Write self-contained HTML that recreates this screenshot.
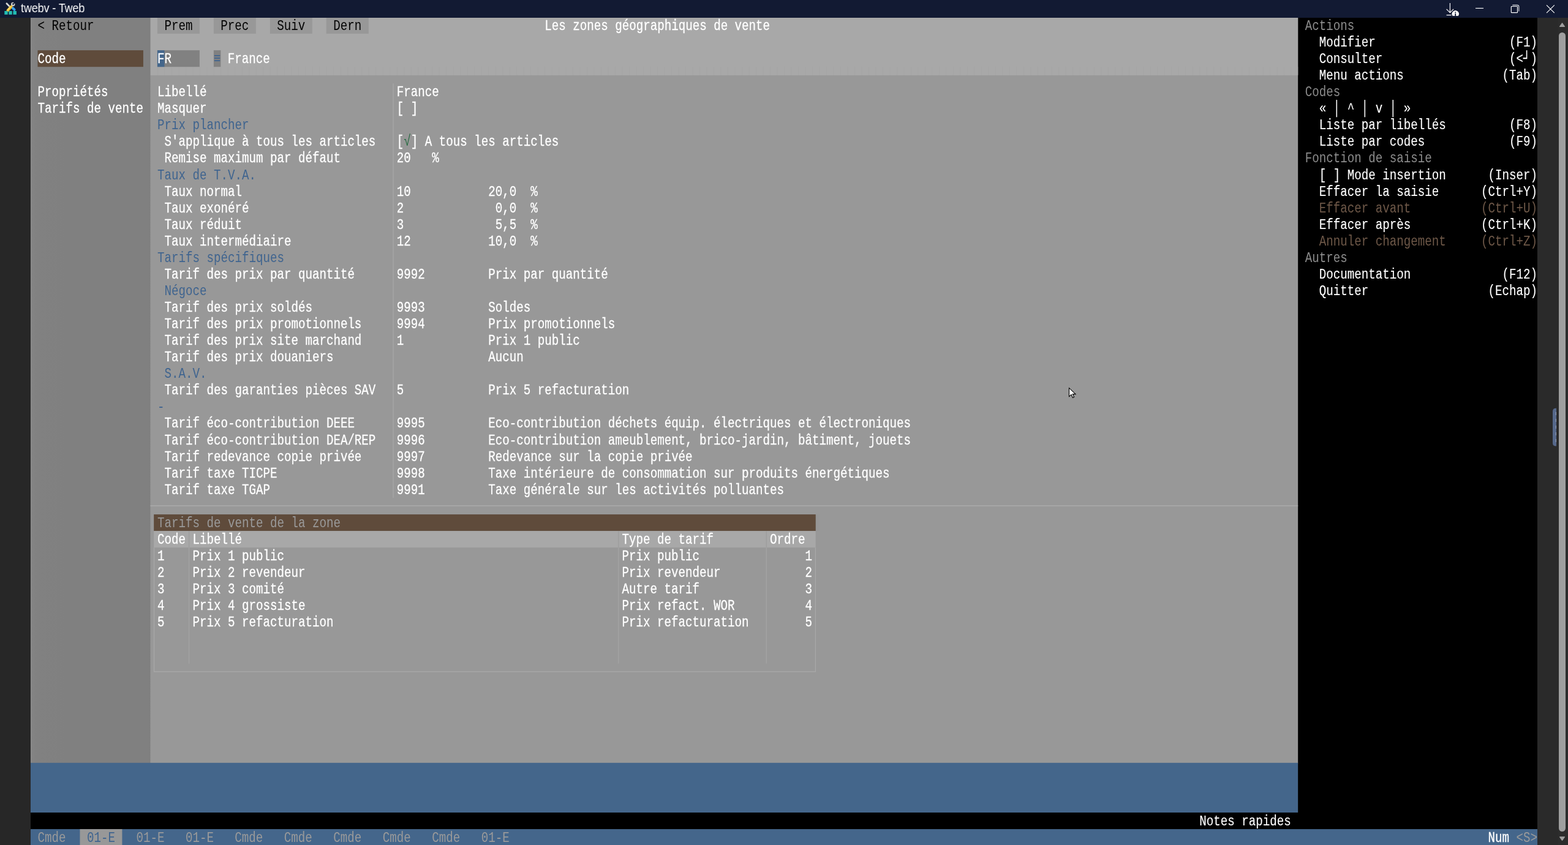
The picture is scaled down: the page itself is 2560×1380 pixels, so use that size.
<!DOCTYPE html>
<html lang="fr"><head><meta charset="utf-8"><title>twebv - Tweb</title>
<style>
html,body{margin:0;padding:0}
body{width:2560px;height:1380px;overflow:hidden;background:#272727;position:relative;font-family:"Liberation Mono",monospace}
#scr{position:absolute;left:0;top:0;width:2560px;height:1380px;overflow:hidden}
.b{position:absolute}
#tx{position:absolute;left:0;top:0;width:2560px;height:1380px;will-change:transform}
.t{position:absolute;white-space:pre;font-family:"Liberation Mono",monospace;font-size:24.75px;line-height:27.06px;height:27.06px;transform-origin:0 0;transform:scaleX(0.77397);color:#fff;-webkit-text-stroke:0.3px #fff}
.n{-webkit-text-stroke:0 transparent}
.d{-webkit-text-stroke:0.12px #fff}
#tb{position:absolute;left:0;top:0;width:2560px;height:29px;background:#121a33}
#tbt{position:absolute;left:34px;top:-1px;height:28px;line-height:28px;font-family:"Liberation Sans",sans-serif;font-size:19.4px;color:#fff;white-space:pre;will-change:transform;transform-origin:0 0;transform:scaleX(0.916)}
#sb{position:absolute;left:2510px;top:29px;width:50px;height:1351px;background:#2a2a2a}
</style></head><body><div id="scr">

<svg class="b" style="left:0;top:0" width="2560" height="1380" viewBox="0 0 2560 1380">
<defs><linearGradient id="lg" x1="0" x2="1" y1="0" y2="0"><stop offset="0" stop-color="#858585"/><stop offset="0.05" stop-color="#818181"/><stop offset="0.3" stop-color="#808080"/><stop offset="0.985" stop-color="#808080"/><stop offset="1" stop-color="#7d7d7d"/></linearGradient>
<pattern id="seam" x="50" y="0" width="11.4953" height="40" patternUnits="userSpaceOnUse"><rect x="0" y="0" width="11.4953" height="40" fill="#a8a8a8"/><rect x="0" y="0" width="1" height="40" fill="#a4a4a4"/></pattern></defs>
<rect x="50" y="28" width="2460" height="1352" fill="#000"/>
<rect x="50" y="28" width="2069.16" height="1218.81" fill="#989898"/>
<rect x="245.42" y="28" width="1873.74" height="94.72" fill="#a8a8a8"/>
<rect x="245.42" y="109.19" width="1873.74" height="13.53" fill="url(#seam)"/>
<rect x="50" y="28" width="195.42" height="1218.81" fill="url(#lg)"/>
<rect x="50" y="28" width="1.2" height="1217.81" fill="#8b8b8b"/>
<rect x="50" y="1245.81" width="2069.16" height="81.19" fill="#44668b"/>
<rect x="50" y="1354.06" width="2460" height="25.94" fill="#44668b"/>
<rect x="256.92" y="28" width="68.97" height="27.06" fill="#989898"/>
<rect x="348.88" y="28" width="68.97" height="27.06" fill="#989898"/>
<rect x="440.84" y="28" width="68.97" height="27.06" fill="#989898"/>
<rect x="532.8" y="28" width="68.97" height="27.06" fill="#989898"/>
<rect x="61.5" y="82.12" width="172.43" height="27.06" fill="#5f4b3b"/>
<rect x="256.92" y="82.12" width="68.97" height="27.06" fill="#818181"/>
<rect x="256.92" y="82.12" width="11.5" height="27.06" fill="#44668b"/>
<rect x="348.88" y="82.12" width="11.5" height="27.06" fill="#818181"/>
<rect x="641.3" y="136.25" width="1.6" height="676.56" fill="#a5a5a5"/>
<rect x="245.42" y="825.2" width="1873.74" height="1.7" fill="#a9a9a9"/>
<rect x="1330.73" y="840.1" width="6.75" height="27.06" fill="#969696"/>
<rect x="251.17" y="840.1" width="1080.56" height="27.06" fill="#5f4b3b"/>
<rect x="251.17" y="867.16" width="1080.56" height="27.06" fill="#a8a8a8"/>
<rect x="250.87" y="894.23" width="1.3" height="202.97" fill="#a8a8a8"/>
<rect x="1330.73" y="894.23" width="1.3" height="202.97" fill="#a8a8a8"/>
<rect x="250.87" y="1096.19" width="1081.16" height="1.4" fill="#a8a8a8"/>
<rect x="308.04" y="867.16" width="1.1" height="27.06" fill="#9b9b9b"/>
<rect x="308.04" y="894.23" width="1.1" height="189.44" fill="#a6a6a6"/>
<rect x="1009.26" y="867.16" width="1.1" height="27.06" fill="#9b9b9b"/>
<rect x="1009.26" y="894.23" width="1.1" height="189.44" fill="#a6a6a6"/>
<rect x="1250.66" y="867.16" width="1.1" height="27.06" fill="#9b9b9b"/>
<rect x="1250.66" y="894.23" width="1.1" height="189.44" fill="#a6a6a6"/>
<rect x="130.47" y="1354.06" width="68.97" height="25.94" fill="#989898"/>
</svg>

<div id="tx">
<span class="t n" style="left:61px;top:28.95px;transform:translateX(0.5px) scaleX(0.77397);color:#000">&lt; Retour</span>
<span class="t n" style="left:268px;top:28.95px;transform:translateX(0.5px) scaleX(0.77397);color:#000">Prem</span>
<span class="t n" style="left:360px;top:28.95px;transform:translateX(0.25px) scaleX(0.77397);color:#000">Prec</span>
<span class="t n" style="left:452px;top:28.95px;transform:translateX(0.25px) scaleX(0.77397);color:#000">Suiv</span>
<span class="t n" style="left:544px;top:28.95px;transform:translateX(0.25px) scaleX(0.77397);color:#000">Dern</span>
<span class="t" style="left:889px;top:28.95px;transform:translateX(0.25px) scaleX(0.77397)">Les zones géographiques de vente</span>
<span class="t" style="left:61px;top:83.08px;transform:translateX(0.5px) scaleX(0.77397)">Code</span>
<span class="t" style="left:257px;top:83.08px">FR</span>
<span class="t n" style="left:349px;top:83.08px;color:#3f648f">≡</span>
<span class="t" style="left:371px;top:83.08px;transform:translateX(0.75px) scaleX(0.77397)">France</span>
<span class="t" style="left:61px;top:137.2px;transform:translateX(0.5px) scaleX(0.77397)">Propriétés</span>
<span class="t" style="left:61px;top:164.26px;transform:translateX(0.5px) scaleX(0.77397)">Tarifs de vente</span>
<span class="t" style="left:257px;top:137.2px">Libellé</span>
<span class="t" style="left:647px;top:137.2px;transform:translateX(0.75px) scaleX(0.77397)">France</span>
<span class="t" style="left:257px;top:164.26px">Masquer</span>
<span class="t" style="left:647px;top:164.26px;transform:translateX(0.75px) scaleX(0.77397)">[ ]</span>
<span class="t n" style="left:257px;top:191.32px;color:#3f648f">Prix plancher</span>
<span class="t" style="left:268px;top:218.39px;transform:translateX(0.5px) scaleX(0.77397)">S'applique à tous les articles</span>
<span class="t" style="left:647px;top:218.39px;transform:translateX(0.75px) scaleX(0.77397)">[ ] A tous les articles</span>
<span class="t" style="left:268px;top:245.45px;transform:translateX(0.5px) scaleX(0.77397)">Remise maximum par défaut</span>
<span class="t" style="left:647px;top:245.45px;transform:translateX(0.75px) scaleX(0.77397)">20   %</span>
<span class="t n" style="left:257px;top:272.51px;color:#3f648f">Taux de T.V.A.</span>
<span class="t" style="left:268px;top:299.57px;transform:translateX(0.5px) scaleX(0.77397)">Taux normal</span>
<span class="t" style="left:647px;top:299.57px;transform:translateX(0.75px) scaleX(0.77397)">10</span>
<span class="t" style="left:797px;top:299.57px;transform:translateX(0.25px) scaleX(0.77397)">20,0  %</span>
<span class="t" style="left:268px;top:326.64px;transform:translateX(0.5px) scaleX(0.77397)">Taux exonéré</span>
<span class="t" style="left:647px;top:326.64px;transform:translateX(0.75px) scaleX(0.77397)">2</span>
<span class="t" style="left:797px;top:326.64px;transform:translateX(0.25px) scaleX(0.77397)"> 0,0  %</span>
<span class="t" style="left:268px;top:353.7px;transform:translateX(0.5px) scaleX(0.77397)">Taux réduit</span>
<span class="t" style="left:647px;top:353.7px;transform:translateX(0.75px) scaleX(0.77397)">3</span>
<span class="t" style="left:797px;top:353.7px;transform:translateX(0.25px) scaleX(0.77397)"> 5,5  %</span>
<span class="t" style="left:268px;top:380.76px;transform:translateX(0.5px) scaleX(0.77397)">Taux intermédiaire</span>
<span class="t" style="left:647px;top:380.76px;transform:translateX(0.75px) scaleX(0.77397)">12</span>
<span class="t" style="left:797px;top:380.76px;transform:translateX(0.25px) scaleX(0.77397)">10,0  %</span>
<span class="t n" style="left:257px;top:407.82px;color:#3f648f">Tarifs spécifiques</span>
<span class="t" style="left:268px;top:434.89px;transform:translateX(0.5px) scaleX(0.77397)">Tarif des prix par quantité</span>
<span class="t" style="left:647px;top:434.89px;transform:translateX(0.75px) scaleX(0.77397)">9992</span>
<span class="t" style="left:797px;top:434.89px;transform:translateX(0.25px) scaleX(0.77397)">Prix par quantité</span>
<span class="t n" style="left:268px;top:461.95px;transform:translateX(0.5px) scaleX(0.77397);color:#3f648f">Négoce</span>
<span class="t" style="left:268px;top:489.01px;transform:translateX(0.5px) scaleX(0.77397)">Tarif des prix soldés</span>
<span class="t" style="left:647px;top:489.01px;transform:translateX(0.75px) scaleX(0.77397)">9993</span>
<span class="t" style="left:797px;top:489.01px;transform:translateX(0.25px) scaleX(0.77397)">Soldes</span>
<span class="t" style="left:268px;top:516.08px;transform:translateX(0.5px) scaleX(0.77397)">Tarif des prix promotionnels</span>
<span class="t" style="left:647px;top:516.08px;transform:translateX(0.75px) scaleX(0.77397)">9994</span>
<span class="t" style="left:797px;top:516.08px;transform:translateX(0.25px) scaleX(0.77397)">Prix promotionnels</span>
<span class="t" style="left:268px;top:543.14px;transform:translateX(0.5px) scaleX(0.77397)">Tarif des prix site marchand</span>
<span class="t" style="left:647px;top:543.14px;transform:translateX(0.75px) scaleX(0.77397)">1</span>
<span class="t" style="left:797px;top:543.14px;transform:translateX(0.25px) scaleX(0.77397)">Prix 1 public</span>
<span class="t" style="left:268px;top:570.2px;transform:translateX(0.5px) scaleX(0.77397)">Tarif des prix douaniers</span>
<span class="t" style="left:797px;top:570.2px;transform:translateX(0.25px) scaleX(0.77397)">Aucun</span>
<span class="t n" style="left:268px;top:597.26px;transform:translateX(0.5px) scaleX(0.77397);color:#3f648f">S.A.V.</span>
<span class="t" style="left:268px;top:624.33px;transform:translateX(0.5px) scaleX(0.77397)">Tarif des garanties pièces SAV</span>
<span class="t" style="left:647px;top:624.33px;transform:translateX(0.75px) scaleX(0.77397)">5</span>
<span class="t" style="left:797px;top:624.33px;transform:translateX(0.25px) scaleX(0.77397)">Prix 5 refacturation</span>
<span class="t n" style="left:257px;top:651.39px;color:#3f648f">-</span>
<span class="t" style="left:268px;top:678.45px;transform:translateX(0.5px) scaleX(0.77397)">Tarif éco-contribution DEEE</span>
<span class="t" style="left:647px;top:678.45px;transform:translateX(0.75px) scaleX(0.77397)">9995</span>
<span class="t" style="left:797px;top:678.45px;transform:translateX(0.25px) scaleX(0.77397)">Eco-contribution déchets équip. électriques et électroniques</span>
<span class="t" style="left:268px;top:705.51px;transform:translateX(0.5px) scaleX(0.77397)">Tarif éco-contribution DEA/REP</span>
<span class="t" style="left:647px;top:705.51px;transform:translateX(0.75px) scaleX(0.77397)">9996</span>
<span class="t" style="left:797px;top:705.51px;transform:translateX(0.25px) scaleX(0.77397)">Eco-contribution ameublement, brico-jardin, bâtiment, jouets</span>
<span class="t" style="left:268px;top:732.58px;transform:translateX(0.5px) scaleX(0.77397)">Tarif redevance copie privée</span>
<span class="t" style="left:647px;top:732.58px;transform:translateX(0.75px) scaleX(0.77397)">9997</span>
<span class="t" style="left:797px;top:732.58px;transform:translateX(0.25px) scaleX(0.77397)">Redevance sur la copie privée</span>
<span class="t" style="left:268px;top:759.64px;transform:translateX(0.5px) scaleX(0.77397)">Tarif taxe TICPE</span>
<span class="t" style="left:647px;top:759.64px;transform:translateX(0.75px) scaleX(0.77397)">9998</span>
<span class="t" style="left:797px;top:759.64px;transform:translateX(0.25px) scaleX(0.77397)">Taxe intérieure de consommation sur produits énergétiques</span>
<span class="t" style="left:268px;top:786.7px;transform:translateX(0.5px) scaleX(0.77397)">Tarif taxe TGAP</span>
<span class="t" style="left:647px;top:786.7px;transform:translateX(0.75px) scaleX(0.77397)">9991</span>
<span class="t" style="left:797px;top:786.7px;transform:translateX(0.25px) scaleX(0.77397)">Taxe générale sur les activités polluantes</span>
<span class="t n" style="left:659px;top:218.39px;transform:translateX(0.25px) scaleX(0.77397);color:#256a40">√</span>
<span class="t n" style="left:257px;top:841.05px;color:#9a9a9a">Tarifs de vente de la zone</span>
<span class="t" style="left:257px;top:868.11px">Code</span>
<span class="t" style="left:314px;top:868.11px;transform:translateX(0.5px) scaleX(0.77397)">Libellé</span>
<span class="t" style="left:1015px;top:868.11px;transform:translateX(0.5px) scaleX(0.77397)">Type de tarif</span>
<span class="t" style="left:1257px;top:868.11px">Ordre</span>
<span class="t" style="left:257px;top:895.18px">1</span>
<span class="t" style="left:314px;top:895.18px;transform:translateX(0.5px) scaleX(0.77397)">Prix 1 public</span>
<span class="t" style="left:1015px;top:895.18px;transform:translateX(0.5px) scaleX(0.77397)">Prix public</span>
<span class="t" style="left:1314px;top:895.18px;transform:translateX(0.5px) scaleX(0.77397)">1</span>
<span class="t" style="left:257px;top:922.24px">2</span>
<span class="t" style="left:314px;top:922.24px;transform:translateX(0.5px) scaleX(0.77397)">Prix 2 revendeur</span>
<span class="t" style="left:1015px;top:922.24px;transform:translateX(0.5px) scaleX(0.77397)">Prix revendeur</span>
<span class="t" style="left:1314px;top:922.24px;transform:translateX(0.5px) scaleX(0.77397)">2</span>
<span class="t" style="left:257px;top:949.3px">3</span>
<span class="t" style="left:314px;top:949.3px;transform:translateX(0.5px) scaleX(0.77397)">Prix 3 comité</span>
<span class="t" style="left:1015px;top:949.3px;transform:translateX(0.5px) scaleX(0.77397)">Autre tarif</span>
<span class="t" style="left:1314px;top:949.3px;transform:translateX(0.5px) scaleX(0.77397)">3</span>
<span class="t" style="left:257px;top:976.36px">4</span>
<span class="t" style="left:314px;top:976.36px;transform:translateX(0.5px) scaleX(0.77397)">Prix 4 grossiste</span>
<span class="t" style="left:1015px;top:976.36px;transform:translateX(0.5px) scaleX(0.77397)">Prix refact. WOR</span>
<span class="t" style="left:1314px;top:976.36px;transform:translateX(0.5px) scaleX(0.77397)">4</span>
<span class="t" style="left:257px;top:1003.43px">5</span>
<span class="t" style="left:314px;top:1003.43px;transform:translateX(0.5px) scaleX(0.77397)">Prix 5 refacturation</span>
<span class="t" style="left:1015px;top:1003.43px;transform:translateX(0.5px) scaleX(0.77397)">Prix refacturation</span>
<span class="t" style="left:1314px;top:1003.43px;transform:translateX(0.5px) scaleX(0.77397)">5</span>
<span class="t n" style="left:2130px;top:28.95px;transform:translateX(0.75px) scaleX(0.77397);color:#8c8c8c">Actions</span>
<span class="t d" style="left:2153px;top:56.01px;transform:translateX(0.75px) scaleX(0.77397)">Modifier</span>
<span class="t d" style="left:2464px;top:56.01px">(F1)</span>
<span class="t d" style="left:2153px;top:83.08px;transform:translateX(0.75px) scaleX(0.77397)">Consulter</span>
<span class="t d" style="left:2464px;top:83.08px">(&lt;┘)</span>
<span class="t d" style="left:2153px;top:110.14px;transform:translateX(0.75px) scaleX(0.77397)">Menu actions</span>
<span class="t d" style="left:2452px;top:110.14px;transform:translateX(0.5px) scaleX(0.77397)">(Tab)</span>
<span class="t n" style="left:2130px;top:137.2px;transform:translateX(0.75px) scaleX(0.77397);color:#8c8c8c">Codes</span>
<span class="t d" style="left:2153px;top:164.26px;transform:translateX(0.75px) scaleX(0.77397)">« │ ^ │ v │ »</span>
<span class="t d" style="left:2153px;top:191.32px;transform:translateX(0.75px) scaleX(0.77397)">Liste par libellés</span>
<span class="t d" style="left:2464px;top:191.32px">(F8)</span>
<span class="t d" style="left:2153px;top:218.39px;transform:translateX(0.75px) scaleX(0.77397)">Liste par codes</span>
<span class="t d" style="left:2464px;top:218.39px">(F9)</span>
<span class="t n" style="left:2130px;top:245.45px;transform:translateX(0.75px) scaleX(0.77397);color:#8c8c8c">Fonction de saisie</span>
<span class="t d" style="left:2153px;top:272.51px;transform:translateX(0.75px) scaleX(0.77397)">[ ] Mode insertion</span>
<span class="t d" style="left:2429px;top:272.51px;transform:translateX(0.5px) scaleX(0.77397)">(Inser)</span>
<span class="t d" style="left:2153px;top:299.57px;transform:translateX(0.75px) scaleX(0.77397)">Effacer la saisie</span>
<span class="t d" style="left:2418px;top:299.57px">(Ctrl+Y)</span>
<span class="t n" style="left:2153px;top:326.64px;transform:translateX(0.75px) scaleX(0.77397);color:#6e5848">Effacer avant</span>
<span class="t n" style="left:2418px;top:326.64px;color:#6e5848">(Ctrl+U)</span>
<span class="t d" style="left:2153px;top:353.7px;transform:translateX(0.75px) scaleX(0.77397)">Effacer après</span>
<span class="t d" style="left:2418px;top:353.7px">(Ctrl+K)</span>
<span class="t n" style="left:2153px;top:380.76px;transform:translateX(0.75px) scaleX(0.77397);color:#6e5848">Annuler changement</span>
<span class="t n" style="left:2418px;top:380.76px;color:#6e5848">(Ctrl+Z)</span>
<span class="t n" style="left:2130px;top:407.82px;transform:translateX(0.75px) scaleX(0.77397);color:#8c8c8c">Autres</span>
<span class="t d" style="left:2153px;top:434.89px;transform:translateX(0.75px) scaleX(0.77397)">Documentation</span>
<span class="t d" style="left:2452px;top:434.89px;transform:translateX(0.5px) scaleX(0.77397)">(F12)</span>
<span class="t d" style="left:2153px;top:461.95px;transform:translateX(0.75px) scaleX(0.77397)">Quitter</span>
<span class="t d" style="left:2429px;top:461.95px;transform:translateX(0.5px) scaleX(0.77397)">(Echap)</span>
<span class="t d" style="left:1958px;top:1327.95px;transform:translateX(0.25px) scaleX(0.77397)">Notes rapides</span>
<span class="t n" style="left:61px;top:1354.95px;transform:translateX(0.5px) scaleX(0.77397);color:#9a9a9a">Cmde</span>
<span class="t n" style="left:142px;top:1354.95px;color:#3f648f">01-E</span>
<span class="t n" style="left:222px;top:1354.95px;transform:translateX(0.5px) scaleX(0.77397);color:#9a9a9a">01-E</span>
<span class="t n" style="left:303px;top:1354.95px;color:#9a9a9a">01-E</span>
<span class="t n" style="left:383px;top:1354.95px;transform:translateX(0.25px) scaleX(0.77397);color:#9a9a9a">Cmde</span>
<span class="t n" style="left:463px;top:1354.95px;transform:translateX(0.75px) scaleX(0.77397);color:#9a9a9a">Cmde</span>
<span class="t n" style="left:544px;top:1354.95px;transform:translateX(0.25px) scaleX(0.77397);color:#9a9a9a">Cmde</span>
<span class="t n" style="left:624px;top:1354.95px;transform:translateX(0.75px) scaleX(0.77397);color:#9a9a9a">Cmde</span>
<span class="t n" style="left:705px;top:1354.95px;transform:translateX(0.25px) scaleX(0.77397);color:#9a9a9a">Cmde</span>
<span class="t n" style="left:785px;top:1354.95px;transform:translateX(0.75px) scaleX(0.77397);color:#9a9a9a">01-E</span>
<span class="t" style="left:2429px;top:1354.95px;transform:translateX(0.5px) scaleX(0.77397)">Num</span>
<span class="t n" style="left:2475px;top:1354.95px;transform:translateX(0.5px) scaleX(0.77397);color:#9a9a9a">&lt;S&gt;</span>
</div>

<div id="sb"></div>
<div class="b" style="left:2544px;top:29px;width:16px;height:1351px;background:#2c2c2c"></div>
<div class="b" style="left:2545px;top:53px;width:11px;height:1305px;background:#9f9f9f;border-radius:5.5px"></div>
<svg class="b" style="left:2510px;top:29px" width="50" height="1351" viewBox="0 0 50 1351">
<path d="M40.5 8.8 L44.4 14.4 L36.6 14.4 Z" fill="#9f9f9f" stroke="#9f9f9f" stroke-width="1.2" stroke-linejoin="round"/>
<path d="M40.5 1343.4 L44.4 1337.8 L36.6 1337.8 Z" fill="#9f9f9f" stroke="#9f9f9f" stroke-width="1.2" stroke-linejoin="round"/>
<path d="M31 637.8 L30 637.8 Q25 637.8 25 643 L25 694.5 Q25 699.6 30 699.6 L31 699.6 Z" fill="#56688a"/>
<path d="M30.4 644 V695" stroke="#c9d2e0" stroke-width="0.6" stroke-dasharray="5 6" fill="none"/>
</svg>
<div id="tb"></div>
<svg class="b" style="left:0;top:0" width="40" height="29" viewBox="0 0 40 29">
<g stroke-linecap="round" fill="none">
<path d="M10.9 5.8 L15.4 10.4" stroke="#d6d6d6" stroke-width="2.7"/>
<path d="M20.2 12.6 L23.5 15.8" stroke="#349ff0" stroke-width="4"/>
<path d="M20.2 8.2 L18 10.6" stroke="#c4c4c4" stroke-width="2.4"/>
<circle cx="21.2" cy="6.9" r="2.3" stroke="#cbcbcb" stroke-width="1.9"/>
<path d="M21.7 6.4 L24.4 3.8" stroke="#121a33" stroke-width="1.7"/>
<path d="M12.7 17.1 L18.2 10.9" stroke="#e8b52a" stroke-width="4.5"/>
<path d="M12.6 16.3 L17.8 10.5" stroke="#fbe377" stroke-width="1.6"/>
</g>
<rect x="7.3" y="18" width="5.4" height="5.8" fill="#23bcb3"/>
<rect x="14.3" y="18" width="5.4" height="5.8" fill="#23bcb3"/>
<rect x="21.4" y="18" width="5.5" height="5.8" fill="#23bcb3"/>
</svg>
<div id="tbt">twebv - Tweb</div>
<svg class="b" style="left:2350px;top:0" width="210" height="29" viewBox="0 0 210 29">
<g stroke="#fff" stroke-width="1.15" fill="none">
<path d="M17.4 5 V20.4 M11.6 14.8 L17.4 20.6 L23.2 14.8 M11.6 24.6 H19.6"/>
<path d="M59 13.5 H72"/>
<path d="M118 10.5 H126.8 Q127.5 10.5 127.5 11.2 V19.9 Q127.5 20.6 126.8 20.6 H118 Q117.3 20.6 117.3 19.9 V11.2 Q117.3 10.5 118 10.5 Z"/>
<path d="M119.3 8.3 H127.2 Q129.8 8.3 129.8 10.9 V18.4" stroke-opacity="0.85"/>
<path d="M175 8.3 L187.8 21.1 M187.8 8.3 L175 21.1"/>
</g>
<path d="M21.6 26 A5.6 5.6 0 1 1 30.8 26 Z" fill="#fff"/>
<circle cx="26.2" cy="20.3" r="1" fill="#121a33"/>
<rect x="25.3" y="22" width="1.8" height="4.2" fill="#121a33"/>
</svg>
<svg class="b" style="left:1744px;top:631px" width="16" height="22" viewBox="0 0 16 22">
<path d="M1.5 2.7 V16.6 L5 13.4 L7.4 18.6 L9.6 17.6 L7.3 12.6 H12 Z" fill="#fff" stroke="#000" stroke-width="1.1" stroke-linejoin="miter"/>
</svg>

</div></body></html>
